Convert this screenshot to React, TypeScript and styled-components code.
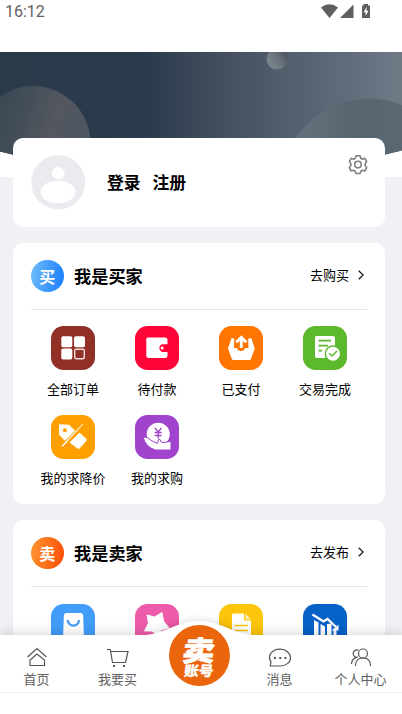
import React from "react";
import styled, { createGlobalStyle } from "styled-components";

const GlobalStyle = createGlobalStyle`
  * { box-sizing: border-box; }
  html, body { margin: 0; height: 714px; overflow: hidden; background: #f0f1f5; }
  body { font-family: "Noto Sans CJK SC", "Noto Sans", sans-serif; color: #000; }
  svg { display: block; }
`;

const Screen = styled.div`
  position: relative;
  width: 402px;
  height: 714px;
  overflow: hidden;
  background: #f0f1f5;
`;

const StatusBar = styled.header`
  display: flex;
  justify-content: space-between;
  align-items: flex-start;
  height: 52px;
  padding: 2px 30px 0 5px;
  background: #fff;
  color: #5f5f5f;
  font: 400 16px/19px Roboto, sans-serif;
`;

const Banner = styled.div`
  height: 125px;
  background: #fff;
`;

const Content = styled.main`
  display: flex;
  flex-direction: column;
  gap: 16px;
  position: relative;
  margin: -39px 17px 0 13px;
`;

const Card = styled.section`
  height: 261px;
  padding: 0 18px;
  border-radius: 10px;
  background: #fff;
`;

const ProfileCard = styled(Card)`
  display: flex;
  height: 89px;
  padding: 17px 17px 0 17.5px;
`;

const AuthLinks = styled.div`
  display: flex;
  flex: 1;
  gap: 12px;
  margin-left: 21.5px;
  padding-top: 16px;
  font-size: 16.8px;
  line-height: 23px;
  font-weight: 700;
`;

const CardHead = styled.div`
  display: flex;
  align-items: center;
  height: 67px;
  border-bottom: 1px solid #e4e4e6;
`;

const Badge = styled.span<{ $from: string; $to: string }>`
  display: grid;
  place-items: center;
  width: 32.500px;
  height: 32.500px;
  border-radius: 50%;
  background: linear-gradient(100deg, ${(p) => p.$from}, ${(p) => p.$to});
  color: #fff;
  font-size: 16px;
  line-height: 20px;
  font-weight: 700;
`;

const Title = styled.h2`
  flex: 1;
  margin: 0 0 0 10.5px;
  font-size: 17.2px;
  line-height: 24px;
  font-weight: 700;
`;

const More = styled.a`
  display: flex;
  align-items: center;
  gap: 9px;
  padding: 0 3px 2px 0;
  font-size: 13px;
  line-height: 18px;
`;

const Grid = styled.div<{ $top: number }>`
  display: grid;
  grid-template-columns: repeat(4, 84px);
  grid-auto-rows: 88.5px;
  padding-top: ${(p) => p.$top}px;
`;

const Item = styled.div`
  display: flex;
  flex-direction: column;
  align-items: center;
  gap: 10px;
  font-size: 13px;
  line-height: 18px;
  white-space: nowrap;
`;

const Tile = styled.span<{ $color: string }>`
  width: 44px;
  height: 44px;
  border-radius: 12.5px;
  background: ${(p) => p.$color};
`;

const TabBar = styled.nav`
  position: absolute;
  left: 0;
  right: 0;
  bottom: 0;
  height: 79px;
  background: #fff;
  box-shadow: 0 0 13px rgba(0, 0, 0, 0.2);
`;

const Tabs = styled.div`
  position: relative;
  display: grid;
  grid-template-columns: repeat(5, 81px);
  height: 58px;
  margin-left: -4px;
  border-bottom: 1px solid #f0f0f0;
`;

const Tab = styled.a`
  display: flex;
  flex-direction: column;
  align-items: center;
  gap: 1px;
  padding-top: 10.5px;
  color: #606060;
  font-size: 13px;
  line-height: 18px;
`;

const Hump = styled.svg`
  position: absolute;
  left: 143px;
  top: -24px;
  overflow: hidden;
`;

const SellButton = styled.button`
  display: flex;
  flex-direction: column;
  align-items: center;
  justify-self: center;
  width: 61px;
  height: 61px;
  margin: -10px 0 0 1px;
  padding: 10px 0 0;
  border: 0;
  border-radius: 50%;
  background: #ea650b;
  color: #fff;
  font-family: "Noto Sans CJK SC", sans-serif;
  font-weight: 900;
`;

const Slanted = styled.span<{ $size: number; $line: number; $stroke: number; $wide: number }>`
  font-size: ${(p) => p.$size}px;
  line-height: ${(p) => p.$line}px;
  -webkit-text-stroke: ${(p) => p.$stroke}px #fff;
  transform: skewX(-7deg) scaleX(${(p) => p.$wide});
`;

const StatusIcons = () => (
  <svg width="52" height="19" viewBox="0 0 52 19" fill="#5f5f5f">
    <path d="M1 5.500Q9.500-1 18 5.500L9.500 16Z" />
    <path d="M33.500 2.500V16H20Z" />
    <path d="M43.500 2H48V3.500H50V16H42V3.500H43.500Z" />
    <path d="M46.500 5L43.600 10.200H45.500V14L48.500 8.700H46.500Z" fill="#fff" />
  </svg>
);

const BannerArt = () => (
  <svg width="402" height="125" viewBox="0 0 402 125">
    <defs>
      <linearGradient id="sky">
        <stop offset="0" stopColor="#2b3a49" />
        <stop offset=".36" stopColor="#2b3b4d" />
        <stop offset=".56" stopColor="#445060" />
        <stop offset=".8" stopColor="#596673" />
        <stop offset="1" stopColor="#6f7a87" />
      </linearGradient>
      <linearGradient id="moon" x1="0" y1=".2" x2="1" y2=".5">
        <stop offset="0" stopColor="#354251" />
        <stop offset=".35" stopColor="#424d57" />
        <stop offset=".65" stopColor="#53575f" />
        <stop offset="1" stopColor="#4c5662" />
      </linearGradient>
      <linearGradient id="hill">
        <stop offset="0" stopColor="#687580" />
        <stop offset=".4" stopColor="#586670" />
        <stop offset="1" stopColor="#5b6976" />
      </linearGradient>
      <linearGradient id="drop" x1=".1" y1=".8" x2="1" y2=".2">
        <stop offset="0" stopColor="#7c868f" />
        <stop offset=".5" stopColor="#6b747d" />
        <stop offset="1" stopColor="#45505d" />
      </linearGradient>
      <clipPath id="curve">
        <path d="M0 0H402V98.500Q201 152 0 99.500Z" />
      </clipPath>
    </defs>
    <g clipPath="url(#curve)">
      <rect width="402" height="125" fill="url(#sky)" />
      <circle cx="33" cy="91.500" r="57.500" fill="url(#moon)" />
      <circle cx="369" cy="134" r="87.500" fill="url(#hill)" />
      <circle cx="277" cy="7" r="10.500" fill="url(#drop)" />
    </g>
  </svg>
);

const Avatar = () => (
  <svg width="55" height="55" viewBox="0 0 55 55">
    <circle cx="27.300" cy="27.300" r="27" fill="#e9ebee" />
    <circle cx="27.300" cy="18.300" r="6.300" fill="#fff" />
    <ellipse cx="27" cy="37" rx="17.500" ry="11.200" fill="#fff" />
  </svg>
);

const Gear = () => (
  <svg width="20" height="20" viewBox="0 0 20 20" fill="none" stroke="#808080" strokeWidth="1.600" strokeLinejoin="round">
    <path d="M8 .8H12L12.800 3.300L14.500 4.200L16.900 3.300L18.700 6.600L17.200 8.500V10.500L18.700 12.700L16.900 16L14.500 15.300L12.800 16.200L12 18.500H8L7.200 16.200L5.500 15.300L3.100 16L1.300 12.700L2.800 10.500V8.500L1.300 6.600L3.100 3.300L5.500 4.200L7.200 3.300Z" />
    <circle cx="10" cy="9.600" r="3.300" />
  </svg>
);

const Chevron = () => (
  <svg width="6" height="10" viewBox="0 0 6 10" fill="none" stroke="#111" strokeWidth="1.200">
    <path d="M.7.700L5.200 5L.7 9.300" />
  </svg>
);

const glyphs: Record<string, React.ReactNode> = {
  orders: (
    <>
      <rect x="10.300" y="10.300" width="11" height="11" rx="1.800" />
      <rect x="23" y="10.300" width="11" height="11" rx="1.800" />
      <rect x="10.300" y="22.500" width="11" height="11" rx="1.800" />
      <rect x="23.700" y="23.200" width="9.600" height="9.600" rx="1.500" fill="none" stroke="#f3dedb" strokeWidth="1.400" />
    </>
  ),
  wallet: (
    <>
      <path d="M13 11.500H30Q32.500 11.500 32.500 14V18.200H27.500A4 4 0 0 0 27.500 26H32.500V29.500Q32.500 32 30 32H14Q11.300 32 11.300 29.500V13.500Q11.300 11.500 13 11.500Z" />
      <circle cx="27.200" cy="22.100" r="1.500" />
    </>
  ),
  paid: (
    <>
      <path d="M12.500 12L15.200 12.800L15 22H18Q18.500 25 22 25T26 22H29.500L29.200 12.800L32.300 12L35.700 22.500L32 33Q31.500 34 30.500 34H14.500Q13.300 34 12.800 33L9 22.500Z" />
      <path d="M22.300 22V12M17.300 16.300L22.300 11.300L27.300 16.300" fill="none" stroke="#fff" strokeWidth="3" />
    </>
  ),
  done: (
    <>
      <path d="M13.500 10H30Q32 10 32 12V32H14Q12 32 12 30V12Q12 10 13.500 10Z" />
      <path d="M15.500 14.700H28M15.500 19.700H25M15.500 24.700H19" stroke="#5cb82c" strokeWidth="1.700" />
      <circle cx="30" cy="27.700" r="7.700" stroke="#5cb82c" strokeWidth="1.400" />
      <path d="M26.200 27.300L29 30L34 25" fill="none" stroke="#5cb82c" strokeWidth="1.500" />
    </>
  ),
  discount: (
    <>
      <path d="M8 10.500Q8 9.300 9.200 9.300L18 9.800L24.300 16L14 26L8 19.500Z" />
      <circle cx="13.800" cy="15.200" r="2" fill="#ff9f00" />
      <path d="M28.500 17.500L35.500 24Q36.300 25 35.500 25.800L28.500 33.500Q27.500 34.300 26.500 33.500L18.500 27.500Z" />
      <path d="M31.500 8.500L10.800 30L9 32.500L12.500 31.500L33 9Z" stroke="#ff9f00" strokeWidth="1" />
    </>
  ),
  request: (
    <>
      <circle cx="23.200" cy="19.200" r="11.500" />
      <path d="M20 13L23.200 17L26.400 13M23.200 17V23.500M19.700 17.500H26.700M19.700 20.500H26.700" fill="none" stroke="#a044cd" strokeWidth="1.300" />
      <path d="M8 22Q12.500 21.500 16 25.300L22.500 28.500L23.500 24.500H25Q25.500 28 29 27.500L36 26.300V35H20.500Q11 32.500 8 22Z" stroke="#a044cd" strokeWidth="1" />
    </>
  ),
  bag: (
    <>
      <path d="M15.500 9H29.500Q32 9 32.200 12L33 36H12L12.800 12Q13 9 15.500 9Z" />
      <path d="M16.800 16A5.600 5.600 0 0 0 28 16" fill="none" stroke="#419df9" strokeWidth="2.200" />
    </>
  ),
  star: (
    <>
      <path d="M12 11L19.500 13L27 8.500L28.500 17L34 24L26.500 26L23 32L17 27L9.500 27L13.500 19Z" strokeLinejoin="round" stroke="#fff" />
      <path d="M19 32Q27 30 33.500 25.500V36H19Z" />
    </>
  ),
  document: (
    <>
      <path d="M14.500 9.500H25V16.500H32V36H13V11Q13 9.500 14.500 9.500Z" />
      <path d="M26.300 9.500L32 15.200H26.300Z" opacity=".7" />
      <path d="M15.500 21.500H29M15.500 26.500H29" stroke="#fcc50a" strokeWidth="1.700" />
    </>
  ),
  trend: (
    <>
      <path d="M11 16L15.500 18.500V38H11ZM17.500 20L22 22.500V38H17.500ZM24 20L28.500 19.500V38H24ZM30.500 24L33.500 27V38H30.500Z" />
      <path d="M9.500 10.500L20.500 17.500L24.500 15L33 23" fill="none" stroke="#fff" strokeWidth="2.200" />
      <path d="M35.500 20.500V26.500H28.700Z" />
    </>
  ),
};

const TileIcon = ({ name, color }: { name: string; color: string }) => (
  <Tile $color={color}>
    <svg width="44" height="44" viewBox="0 0 44 44" fill="#fff">
      {glyphs[name]}
    </svg>
  </Tile>
);

type Entry = { icon: string; color: string; label: string };

const buyer: Entry[] = [
  { icon: "orders", color: "#923027", label: "全部订单" },
  { icon: "wallet", color: "#ff0438", label: "待付款" },
  { icon: "paid", color: "#ff7500", label: "已支付" },
  { icon: "done", color: "#5cb82c", label: "交易完成" },
  { icon: "discount", color: "#ff9f00", label: "我的求降价" },
  { icon: "request", color: "#a044cd", label: "我的求购" },
];

const seller: Entry[] = [
  { icon: "bag", color: "#419df9", label: "" },
  { icon: "star", color: "#ee5baa", label: "" },
  { icon: "document", color: "#fcc50a", label: "" },
  { icon: "trend", color: "#0762c8", label: "" },
];

type RoleProps = {
  mark: string;
  from: string;
  to: string;
  title: string;
  more: string;
  top: number;
  entries: Entry[];
};

const RoleCard = (p: RoleProps) => (
  <Card>
    <CardHead>
      <Badge $from={p.from} $to={p.to}>{p.mark}</Badge>
      <Title>{p.title}</Title>
      <More>{p.more}<Chevron /></More>
    </CardHead>
    <Grid $top={p.top}>
      {p.entries.map((e) => (
        <Item key={e.icon}>
          <TileIcon name={e.icon} color={e.color} />
          {e.label}
        </Item>
      ))}
    </Grid>
  </Card>
);

const TabIcon = ({ children }: { children: React.ReactNode }) => (
  <svg width="24" height="23" viewBox="0 0 24 23" fill="none" stroke="#555" strokeWidth="1.200">
    {children}
  </svg>
);

export default function App() {
  return (
    <Screen>
      <GlobalStyle />
      <StatusBar>16:12<StatusIcons /></StatusBar>
      <Banner><BannerArt /></Banner>
      <Content>
        <ProfileCard>
          <Avatar />
          <AuthLinks><span>登录</span><span>注册</span></AuthLinks>
          <Gear />
        </ProfileCard>
        <RoleCard mark="买" from="#74bffc" to="#147bfb" title="我是买家" more="去购买" top={16} entries={buyer} />
        <RoleCard mark="卖" from="#ff9832" to="#fb4b02" title="我是卖家" more="去发布" top={17} entries={seller} />
      </Content>
      <TabBar>
        <Hump width="112" height="26" viewBox="0 0 112 26">
          <defs>
            <filter id="soft" x="-20%" y="-80%" width="140%" height="220%">
              <feGaussianBlur stdDeviation="4" />
            </filter>
          </defs>
          <path d="M3 24C24 23 30 10 56 10S88 23 109 24Z" fill="#000" opacity=".16" filter="url(#soft)" />
          <path d="M3 24C24 22 34 10 56 10S88 22 109 24V26H3Z" fill="#fff" />
        </Hump>
        <Tabs>
          <Tab>
            <TabIcon>
              <path d="M2.500 11L12 2.500L21.500 11M5 19.500V14L12 8L19.500 14V19.500Z" />
            </TabIcon>
            首页
          </Tab>
          <Tab>
            <TabIcon>
              <path d="M1 3.500H4.300L6.500 16.500H19.500L22 5.500H4.800" />
              <path d="M7 20H9M17 20H19" strokeWidth="1.800" />
            </TabIcon>
            我要买
          </Tab>
          <SellButton>
            <Slanted $size={28} $line={28} $stroke={0.5} $wide={1.17}>卖</Slanted>
            <Slanted $size={14} $line={15} $stroke={0.2} $wide={1.05}>账号</Slanted>
          </SellButton>
          <Tab>
            <TabIcon>
              <path d="M2.200 20L3 16C-1.500 8.500 5 3.200 12 3.200C18 3.200 22.500 7 22.500 11.700C22.500 16.500 18 20 12 20Z" />
              <path d="M6 12H8M11.200 12H13.200M16.400 12H18.400" strokeWidth="2" />
            </TabIcon>
            消息
          </Tab>
          <Tab>
            <TabIcon>
              <circle cx="14" cy="7.500" r="4.500" />
              <path d="M6.500 20Q6.500 12 14 12T21.500 20M9.500 4.300A3.700 3.700 0 1 0 8.800 11.200Q2.500 12.500 2.500 18" />
            </TabIcon>
            个人中心
          </Tab>
        </Tabs>
      </TabBar>
    </Screen>
  );
}
